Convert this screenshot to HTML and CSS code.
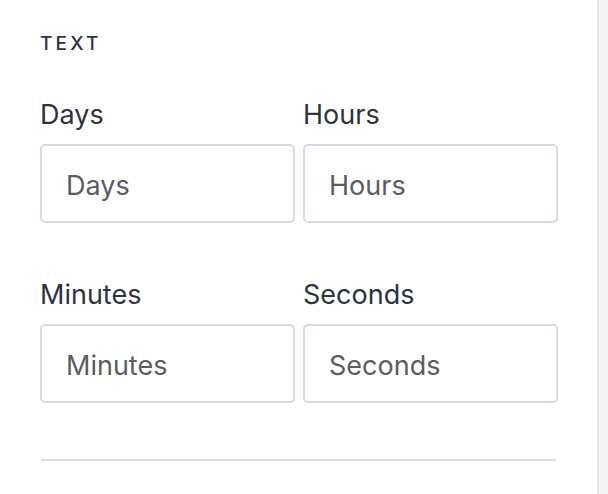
FILE: index.html
```html
<!DOCTYPE html>
<html>
<head>
<meta charset="utf-8">
<link rel="stylesheet" href="styles.css">
</head>
<body>
<div class="layout">
  <section class="panel">
    <h2 class="heading">TEXT</h2>
    <div class="grid">
      <label class="field">
        <span class="label">Days</span>
        <input class="input" type="text" placeholder="Days">
      </label>
      <label class="field">
        <span class="label">Hours</span>
        <input class="input" type="text" placeholder="Hours">
      </label>
      <label class="field">
        <span class="label">Minutes</span>
        <input class="input" type="text" placeholder="Minutes">
      </label>
      <label class="field">
        <span class="label">Seconds</span>
        <input class="input" type="text" placeholder="Seconds">
      </label>
    </div>
    <hr class="divider">
  </section>
  <aside class="strip"></aside>
</div>
</body>
</html>
```

FILE: styles.css
```css
* { box-sizing: border-box; }
html, body { margin: 0; padding: 0; }
body {
  font-family: Inter, "Helvetica Neue", Arial, sans-serif;
  background: #f3f4f6;
  color: #2d3340;
  height: 494px;
  overflow: hidden;
}
.layout {
  display: flex;
  height: 494px;
}
.panel {
  width: 599px;
  flex: none;
  background: #fff;
  border-right: 2px solid #e3e7ec;
  padding: 30px 40px 0 40px;
}
.strip {
  flex: 1;
  background: #f3f4f6;
}
.heading {
  margin: 0 0 39px 0;
  font-size: 19px;
  font-weight: 500;
  letter-spacing: 3.2px;
  line-height: 28px;
  color: #2d3340;
}
.grid {
  display: grid;
  grid-template-columns: 255px 255px;
  column-gap: 8px;
  row-gap: 54px;
}
.field {
  display: flex;
  flex-direction: column;
}
.label {
  font-size: 27px;
  line-height: 36px;
  margin-bottom: 11px;
  color: #2d3340;
}
.input {
  height: 79px;
  border: 2px solid #d3dce6;
  border-radius: 5px;
  padding: 3px 24px 0 24px;
  font-family: inherit;
  font-size: 27px;
  color: #2d3340;
  background: #fff;
  outline: none;
}
.input::placeholder {
  color: #5a5c61;
}
.divider {
  margin: 56px 1px 0 1px;
  border: 0;
  border-top: 2px solid #d8e0e8;
  height: 0;
}
```
